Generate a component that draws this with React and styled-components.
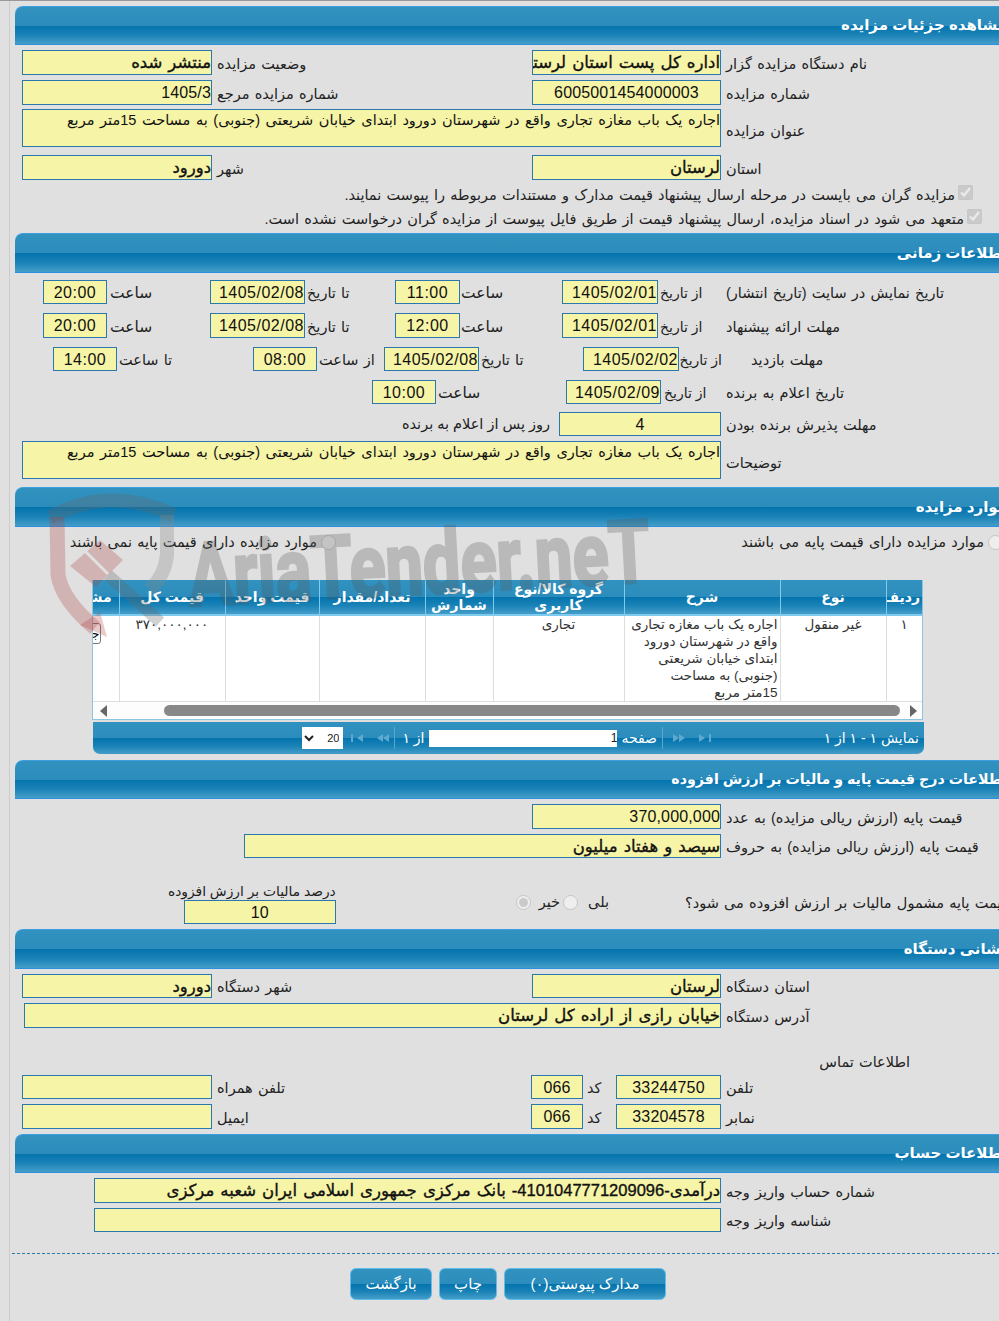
import React from 'react';
import styled, { createGlobalStyle } from 'styled-components';

const font = '"Liberation Sans", "DejaVu Sans", sans-serif';
const band = 'linear-gradient(to bottom, #3192c0 0%, #2c8cbb 50%, #0474ae 51%, #1a82b6 75%, #449dc9 100%)';

const Global = createGlobalStyle`
  html, body { margin: 0; padding: 0; background: #e0e0e0; overflow: hidden; }
`;

const Root = styled.div`
  position: relative;
  width: 999px;
  height: 1321px;
  overflow: hidden;
  border-top: 1px solid #999;
  box-sizing: border-box;
  font-family: ${font};
  font-size: 14.5px;
  word-spacing: 1.2px;
  color: #222;
`;

const Shell = styled.div`
  width: 1000px;
  margin-left: 9px;
  padding-left: 5px;
  border-left: 1px solid #ccc;
  height: 100%;
  direction: rtl;
`;

const Wrap = styled.div`
  width: 1000px;
  padding-top: 5px;
`;

const Header = styled.div`
  height: ${(p) => p.$h || 40}px;
  box-sizing: border-box;
  border-top: 1px solid #3b9fe0;
  border-bottom: 1px solid #2d90de;
  border-top-left-radius: 8px;
  background: ${band};
  color: #fff;
  font-weight: 700;
  font-size: ${(p) => p.$fs || 15}px;
  word-spacing: 0;
  line-height: ${(p) => (p.$h || 40) - 3}px;
  padding-right: 8px;
  white-space: nowrap;
`;

const Body = styled.div`
  padding-left: 7px;
  padding-bottom: ${(p) => p.$pb || 0}px;
`;

const Row = styled.div`
  display: flex;
  align-items: center;
  height: ${(p) => p.$h || 24}px;
  margin-top: ${(p) => p.$mt || 0}px;
`;

const Label = styled.div`
  flex: none;
  width: ${(p) => p.$w}px;
  box-sizing: border-box;
  text-align: left;
  padding-left: ${(p) => (p.$pl === undefined ? 5 : p.$pl)}px;
  padding-top: ${(p) => p.$pt || 2}px;
  font-size: ${(p) => p.$fs || 14.5}px;
  word-spacing: ${(p) => (p.$fs ? 0 : 1.2)}px;
  white-space: nowrap;
  line-height: 20px;
`;

const Field = styled.div`
  flex: none;
  width: ${(p) => p.$w}px;
  height: ${(p) => p.$rh || 24}px;
  box-sizing: border-box;
  border: 1px solid #2b78ae;
  background: #f6f4a6;
  color: #111;
  overflow: hidden;
  white-space: ${(p) => (p.$wrap ? 'normal' : 'nowrap')};
  text-align: ${(p) => (p.$center ? 'center' : 'right')};
  font-size: ${(p) => (p.$strong ? 16.5 : p.$num ? 16 : 14.5)}px;
  word-spacing: ${(p) => (p.$wrap ? 1.6 : p.$strong ? 1.5 : 1.2)}px;
  letter-spacing: ${(p) => (p.$date ? 0.5 : p.$num ? 0.15 : 0)}px;
  -webkit-text-stroke: ${(p) => (p.$strong ? '0.35px #111' : '0')};
  line-height: ${(p) => (p.$wrap ? '20px' : p.$strong ? '22px' : '24px')};
`;

const Plain = styled.div`
  white-space: nowrap;
  padding-right: ${(p) => p.$pr || 0}px;
  word-spacing: ${(p) => (p.$tight ? 0 : 1.2)}px;
`;

const Check = styled.input`
  flex: none;
  width: 15px;
  height: 15px;
  margin: 0 0 6px 3px;
`;

const RadioInput = styled.input`
  flex: none;
  width: 15px;
  height: 15px;
  margin: ${(p) => p.$m || '0'};
`;

const RadioCell = styled.div`
  flex: none;
  display: flex;
  align-items: center;
  gap: 4px;
  width: ${(p) => p.$w}px;
  box-sizing: border-box;
  padding-right: 12px;
  white-space: nowrap;
`;

const TaxBox = styled.div`
  display: flex;
  flex-direction: column;
  align-items: flex-start;
  margin-right: ${(p) => p.$mr}px;
  align-self: flex-end;
`;

const TaxLabel = styled.div`
  white-space: nowrap;
  font-size: 13.8px;
  word-spacing: 0;
  line-height: 14px;
  margin-bottom: 1px;
`;

const Grid = styled.div`
  margin: 29px 92px 0 0;
  width: 831px;
  height: 140px;
  box-sizing: border-box;
  border: 1px solid #8cc5e0;
  border-top: 0;
  background: #fff;
  overflow: hidden;
  display: flex;
  flex-direction: column;
`;

const Table = styled.table`
  table-layout: fixed;
  border-collapse: collapse;
  width: 872px;
  flex: none;
  height: 120px;
`;

const Th = styled.th`
  height: 34px;
  padding: 0 2px;
  background: ${band};
  color: #fff;
  font-size: 14px;
  word-spacing: 0;
  line-height: 16px;
  font-weight: 700;
  border-left: 1px solid #7fcbed;
  border-bottom: 2px solid #7fcbed;
  overflow: hidden;
  white-space: ${(p) => (p.$nw ? 'nowrap' : 'normal')};
`;

const Td = styled.td`
  vertical-align: top;
  text-align: center;
  padding: 0 2px;
  font-size: 13.5px;
  word-spacing: 0;
  line-height: 17px;
  color: #333;
  border-left: 1px solid #ddd;
  border-bottom: 1px solid #ddd;
  overflow: hidden;
  white-space: nowrap;
`;

const DescCell = styled(Td)`
  text-align: right;
`;

const AmountCell = styled(Td)`
  letter-spacing: 1.5px;
`;

const ViewBtn = styled.button`
  display: block;
  width: 32px;
  height: 21px;
  margin: 7px auto 0;
  padding: 0;
  border: 1px solid #777;
  border-radius: 3px;
  background: #fff;
  font: 12px ${font};
  overflow: hidden;
`;

const Scroll = styled.div`
  flex: 1;
  display: flex;
  align-items: center;
  direction: ltr;
  padding: 0 7px;
  gap: 57px;
  background: #fdfdfd;
`;

const Thumb = styled.div`
  flex: none;
  width: 736px;
  height: 11px;
  border-radius: 6px;
  background: #888;
`;

const Arrow = styled.div`
  flex: none;
  width: 0;
  height: 0;
  border-top: 6px solid transparent;
  border-bottom: 6px solid transparent;
  ${(p) => (p.$left ? 'border-right: 7px solid #666;' : 'border-left: 7px solid #666; margin-left: -47px;')}
`;

const Pager = styled.div`
  margin: 2px 91px 0 0;
  width: 831px;
  height: 32px;
  box-sizing: border-box;
  display: flex;
  align-items: center;
  padding-right: 5px;
  background: ${band};
  border-radius: 0 0 7px 7px;
  color: #fff;
  font-size: 14px;
  word-spacing: 0;
`;

const PagerInfo = styled.div`
  width: 256px;
  flex: none;
  display: flex;
  align-items: center;
  justify-content: space-between;
  white-space: nowrap;
`;

const Sep = styled.div`
  flex: none;
  width: 1px;
  height: 22px;
  margin-right: ${(p) => p.$mr || 0}px;
  background: #5aa5cc;
`;

const NavGroup = styled.div`
  flex: none;
  display: flex;
  justify-content: center;
  gap: 12px;
  width: ${(p) => p.$w}px;
  margin-left: ${(p) => p.$ml || 0}px;
`;

const PageInput = styled.div`
  flex: none;
  width: 188px;
  height: 17px;
  background: #fff;
  color: #222;
  font-size: 12px;
  line-height: 17px;
  text-align: right;
  margin: 0 4px 0 5px;
`;

const PageSelect = styled.select`
  flex: none;
  width: 41px;
  height: 22px;
  margin-right: 3px;
  border: 0;
  background: #fff;
  color: #222;
  font: 11px ${font};
`;

const Dashed = styled.div`
  margin: 21px 0 0 -3px;
  border-top: 1px dashed #2b78ae;
`;

const Actions = styled.div`
  display: flex;
  gap: 7px;
  margin-top: 14px;
  padding-right: 349px;
`;

const Action = styled.button`
  width: ${(p) => p.$w}px;
  height: 32px;
  border: 1px solid #62bbe8;
  border-radius: 6px;
  background: ${band};
  color: #fff;
  font: 15px ${font};
  padding: 0;
`;

const Watermark = styled.svg`
  position: absolute;
  left: 0;
  top: -1px;
  pointer-events: none;
`;

const NavIcon = ({ dir, end }) => (
  <svg width="14" height="10" viewBox="0 0 14 10">
    <g fill="#5fa9cf" transform={dir === 'right' ? 'translate(14,0) scale(-1,1)' : undefined}>
      {end ? <rect x="1" y="1" width="2" height="8" /> : <path d="M1 5 L7 1 V9 Z" />}
      <path d="M7 5 L13 1 V9 Z" />
    </g>
  </svg>
);

const desc = 'اجاره یک باب مغازه تجاری واقع در شهرستان دورود ابتدای خیابان شریعتی (جنوبی) به مساحت 15متر مربع';

const TwoCol = ({ a, b, c, d, h, mt, strong, strongB, num, numB, center }) => (
  <Row $h={h} $mt={mt}>
    <Label $w={294}>{a}</Label>
    <Field $w={189} $rh={h} $strong={strong} $num={num} $center={center}>{b}</Field>
    <Label $w={320}>{c}</Label>
    <Field $w={190} $rh={h} $strong={strongB} $num={numB}>{d}</Field>
  </Row>
);

const App = () => (
  <Root>
    <Global />
    <Shell>
      <Wrap>
        <Header $h={39}>مشاهده جزئیات مزایده</Header>
        <Body $pb={5}>
          <TwoCol h={25} mt={5} a="نام دستگاه مزایده گزار" b="اداره کل پست استان لرستان" c="وضعیت مزایده" d="منتشر شده" strong strongB />
          <TwoCol h={25} mt={5} a="شماره مزایده" b="6005001454000003" c="شماره مزایده مرجع" d="1405/3" num numB center />
          <Row $h={38} $mt={4}>
            <Label $w={294} $pt={5}>عنوان مزایده</Label>
            <Field $w={699} $rh={38} $wrap>{desc}</Field>
          </Row>
          <TwoCol h={25} mt={8} a="استان" b="لرستان" c="شهر" d="دورود" strong strongB />
          <Row $h={18} $mt={6}>
            <Plain $pr={42}><Check type="checkbox" checked disabled readOnly /></Plain>
            <Plain>مزایده گران می بایست در مرحله ارسال پیشنهاد قیمت مدارک و مستندات مربوطه را پیوست نمایند.</Plain>
          </Row>
          <Row $h={18} $mt={6}>
            <Plain $pr={33}><Check type="checkbox" checked disabled readOnly /></Plain>
            <Plain>متعهد می شود در اسناد مزایده، ارسال پیشنهاد قیمت از طریق فایل پیوست از مزایده گران درخواست نشده است.</Plain>
          </Row>
        </Body>

        <Header>اطلاعات زمانی</Header>
        <Body $pb={8}>
          <Row $h={24} $mt={7}>
            <Label $w={294}>تاریخ نمایش در سایت (تاریخ انتشار)</Label>
            <Label $w={63} $pl={2} $fs={14}>از تاریخ</Label>
            <Field $w={96} $num $date>1405/02/01</Field>
            <Label $w={102} $pl={1} $fs={15.5}>ساعت</Label>
            <Field $w={65} $num $date $center>11:00</Field>
            <Label $w={90} $pl={2}>تا تاریخ</Label>
            <Field $w={95} $num $date>1405/02/08</Field>
            <Label $w={103} $pl={3} $fs={15.5}>ساعت</Label>
            <Field $w={64} $num $date $center>20:00</Field>
          </Row>
          <Row $h={25} $mt={9}>
            <Label $w={294}>مهلت ارائه پیشنهاد</Label>
            <Label $w={63} $pl={2} $fs={14}>از تاریخ</Label>
            <Field $w={96} $rh={25} $num $date>1405/02/01</Field>
            <Label $w={102} $pl={1} $fs={15.5}>ساعت</Label>
            <Field $w={65} $rh={25} $num $date $center>12:00</Field>
            <Label $w={90} $pl={2}>تا تاریخ</Label>
            <Field $w={95} $rh={25} $num $date>1405/02/08</Field>
            <Label $w={103} $pl={3} $fs={15.5}>ساعت</Label>
            <Field $w={64} $rh={25} $num $date $center>20:00</Field>
          </Row>
          <Row $h={24} $mt={9}>
            <Label $w={293} $pl={29}>مهلت بازدید</Label>
            <Label $w={43} $pl={3} $fs={14}>از تاریخ</Label>
            <Field $w={96} $num $date>1405/02/02</Field>
            <Label $w={104} $pl={2}>تا تاریخ</Label>
            <Field $w={95} $num $date>1405/02/08</Field>
            <Label $w={67} $pl={2}>از ساعت</Label>
            <Field $w={64} $num $date $center>08:00</Field>
            <Label $w={136} $pl={2}>تا ساعت</Label>
            <Field $w={64} $num $date $center>14:00</Field>
          </Row>
          <Row $h={24} $mt={9}>
            <Label $w={294}>تاریخ اعلام به برنده</Label>
            <Label $w={60} $pl={3} $fs={14}>از تاریخ</Label>
            <Field $w={95} $num $date>1405/02/09</Field>
            <Label $w={130} $pl={2} $fs={15.5}>ساعت</Label>
            <Field $w={64} $num $date $center>10:00</Field>
          </Row>
          <Row $h={24} $mt={8}>
            <Label $w={294}>مهلت پذیرش برنده بودن</Label>
            <Field $w={162} $num $center>4</Field>
            <Plain $pr={9} $tight>روز پس از اعلام به برنده</Plain>
          </Row>
          <Row $h={38} $mt={5}>
            <Label $w={294} $pt={5}>توضیحات</Label>
            <Field $w={699} $rh={38} $wrap>{desc}</Field>
          </Row>
        </Body>

        <Header>موارد مزایده</Header>
        <Body $pb={6}>
          <Row $h={18} $mt={6}>
            <RadioCell $w={679}>
              <RadioInput type="radio" disabled />
              موارد مزایده دارای قیمت پایه می باشند
            </RadioCell>
            <RadioInput type="radio" disabled $m="0 0 0 4px" />
            <Plain>موارد مزایده دارای قیمت پایه نمی باشند</Plain>
          </Row>
          <Grid>
            <Table>
              <colgroup>
                <col style={{ width: 36 }} />
                <col style={{ width: 106 }} />
                <col style={{ width: 156 }} />
                <col style={{ width: 131 }} />
                <col style={{ width: 68 }} />
                <col style={{ width: 106 }} />
                <col style={{ width: 94 }} />
                <col style={{ width: 106 }} />
                <col style={{ width: 69 }} />
              </colgroup>
              <thead>
                <tr>
                  <Th $nw>ردیف</Th>
                  <Th>نوع</Th>
                  <Th>شرح</Th>
                  <Th>گروه کالا/نوع کاربری</Th>
                  <Th>واحد شمارش</Th>
                  <Th $nw>تعداد/مقدار</Th>
                  <Th $nw>قیمت واحد</Th>
                  <Th $nw>قیمت کل</Th>
                  <Th $nw>مشاهده</Th>
                </tr>
              </thead>
              <tbody>
                <tr>
                  <Td>۱</Td>
                  <Td>غیر منقول</Td>
                  <DescCell>
                    اجاره یک باب مغازه تجاری<br />
                    واقع در شهرستان دورود<br />
                    ابتدای خیابان شریعتی<br />
                    (جنوبی) به مساحت<br />
                    15متر مربع
                  </DescCell>
                  <Td>تجاری</Td>
                  <Td />
                  <Td />
                  <Td />
                  <AmountCell>۳۷۰,۰۰۰,۰۰۰</AmountCell>
                  <Td><ViewBtn>جزئیات</ViewBtn></Td>
                </tr>
              </tbody>
            </Table>
            <Scroll>
              <Arrow $left />
              <Thumb />
              <Arrow />
            </Scroll>
          </Grid>
          <Pager>
            <PagerInfo>
              نمایش ۱ - ۱ از ۱
              <NavGroup $w={40} $ml={9}>
                <NavIcon dir="right" end />
                <NavIcon dir="right" />
              </NavGroup>
            </PagerInfo>
            <Sep />
            <Plain $pr={5} $tight>صفحه</Plain>
            <PageInput>1</PageInput>
            <Plain $tight>از ۱</Plain>
            <Sep $mr={7} />
            <NavGroup $w={48}>
              <NavIcon dir="left" />
              <NavIcon dir="left" end />
            </NavGroup>
            <PageSelect defaultValue="20" dir="rtl">
              <option value="20">20</option>
            </PageSelect>
          </Pager>
        </Body>

        <Header $h={39} $fs={14.2}>اطلاعات درج قیمت پایه و مالیات بر ارزش افزوده</Header>
        <Body $pb={5}>
          <Row $h={25} $mt={5}>
            <Label $w={294}>قیمت پایه (ارزش ریالی مزایده) به عدد</Label>
            <Field $w={189} $rh={25} $num>370,000,000</Field>
          </Row>
          <Row $h={24} $mt={5}>
            <Label $w={294}>قیمت پایه (ارزش ریالی مزایده) به حروف</Label>
            <Field $w={477} $strong>سیصد و هفتاد میلیون</Field>
          </Row>
          <Row $h={44} $mt={22}>
            <Label $w={330} $pl={0}>قیمت پایه مشمول مالیات بر ارزش افزوده می شود؟</Label>
            <Plain $pr={76}>بلی</Plain>
            <RadioInput type="radio" disabled $m="0 10px 0 0" />
            <Plain $pr={3}>خیر</Plain>
            <RadioInput type="radio" disabled checked readOnly $m="0 8px 0 0" />
            <TaxBox $mr={180}>
              <TaxLabel>درصد مالیات بر ارزش افزوده</TaxLabel>
              <Field $w={152} $num $center>10</Field>
            </TaxBox>
          </Row>
        </Body>

        <Header>نشانی دستگاه</Header>
        <Body $pb={5}>
          <TwoCol h={24} mt={5} a="استان دستگاه" b="لرستان" c="شهر دستگاه" d="دورود" strong strongB />
          <Row $h={25} $mt={5}>
            <Label $w={294}>آدرس دستگاه</Label>
            <Field $w={697} $rh={25} $strong>خیابان رازی از اراده کل لرستان</Field>
          </Row>
          <Row $h={20} $mt={24}>
            <Plain $pr={105}>اطلاعات تماس</Plain>
          </Row>
          <Row $h={24} $mt={3}>
            <Label $w={294}>تلفن</Label>
            <Field $w={105} $num $center>33244750</Field>
            <Label $w={33} $pl={4}>کد</Label>
            <Field $w={52} $num $center>066</Field>
            <Label $w={319}>تلفن همراه</Label>
            <Field $w={190} />
          </Row>
          <Row $h={25} $mt={5}>
            <Label $w={294}>نمابر</Label>
            <Field $w={105} $rh={25} $num $center>33204578</Field>
            <Label $w={33} $pl={4}>کد</Label>
            <Field $w={52} $rh={25} $num $center>066</Field>
            <Label $w={319}>ایمیل</Label>
            <Field $w={190} $rh={25} />
          </Row>
        </Body>

        <Header $h={39}>اطلاعات حساب</Header>
        <Body>
          <Row $h={25} $mt={5}>
            <Label $w={294}>شماره حساب واریز وجه</Label>
            <Field $w={627} $rh={25} $strong>درآمدی-4101047771209096- بانک مرکزی جمهوری اسلامی ایران شعبه مرکزی</Field>
          </Row>
          <Row $h={24} $mt={5}>
            <Label $w={294}>شناسه واریز وجه</Label>
            <Field $w={627} />
          </Row>
        </Body>
        <Dashed />
        <Actions>
          <Action $w={162}>مدارک پیوستی(۰)</Action>
          <Action $w={58}>چاپ</Action>
          <Action $w={82}>بازگشت</Action>
        </Actions>
      </Wrap>
    </Shell>

    <Watermark width="999" height="700" viewBox="0 0 999 700">
      <path d="M50 517 Q110 485 174 515" fill="none" stroke="#666" strokeOpacity=".3" strokeWidth="14" />
      <path d="M167 515 V555 Q165 575 150 590" fill="none" stroke="#888" strokeOpacity=".3" strokeWidth="14" />
      <path d="M57 517 L58 575 Q62 600 95 628" fill="none" stroke="#b04040" strokeOpacity=".28" strokeWidth="15" />
      <path d="M80 625 L100 612 L107 637 Z" fill="#b04040" fillOpacity=".28" />
      <path d="M70 566 L100 540 L123 560 L96 587 Z" fill="#b04040" fillOpacity=".28" />
      <path d="M84 550 L108 574" fill="none" stroke="#e0e0e0" strokeWidth="3" />
      <path d="M108 575 L160 622" fill="none" stroke="#666" strokeOpacity=".3" strokeWidth="12" />
      <g opacity=".27">
        <text x="190" y="606" transform="rotate(-3 190 606)" fontFamily="Roboto, sans-serif" fontSize="88" fontWeight="700" fill="#555" stroke="#555" strokeWidth="3" textLength="462" lengthAdjust="spacingAndGlyphs" direction="ltr">AriaTender.neT</text>
      </g>
    </Watermark>
  </Root>
);

export default App;
